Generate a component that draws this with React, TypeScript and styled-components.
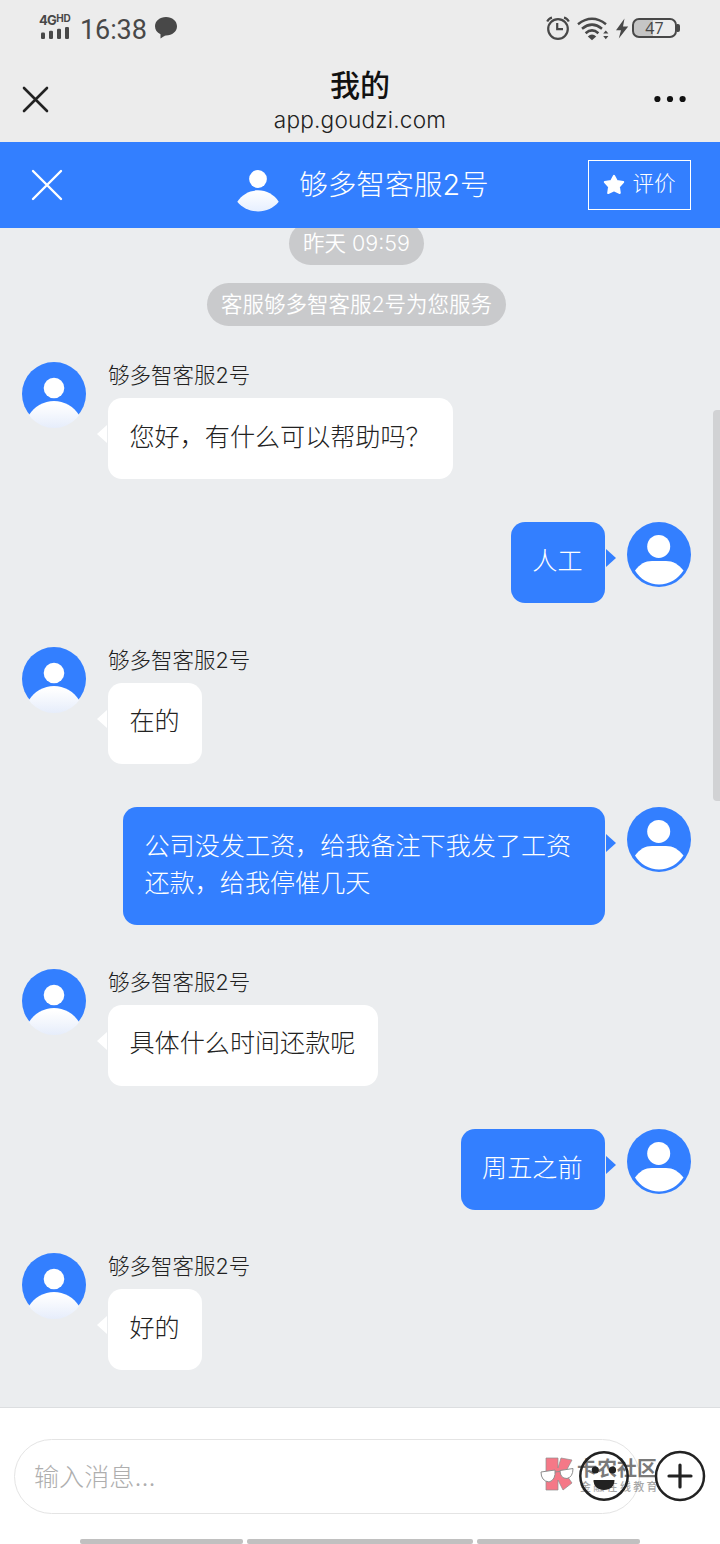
import React from "react";
import styled, { createGlobalStyle } from "styled-components";

const BLUE = "#337fff";

const GlobalStyle = createGlobalStyle`
  * { box-sizing: border-box; }
  body {
    margin: 0;
    background: #ebedf0;
    font-family: "Inter", "Noto Sans CJK SC", "Noto Sans", sans-serif;
    font-weight: 300;
  }
  svg { display: block; flex: none; }
`;

const Screen = styled.div`
  position: relative;
  width: 720px;
  height: 1544px;
  display: flex;
  flex-direction: column;
  overflow: hidden;
  background: #ebedef;
`;

const StatusBar = styled.div`
  height: 56px;
  flex: none;
  display: flex;
  align-items: center;
  padding: 0 39px 0 39px;
  background: #ececec;
  color: #484848;
`;

const Signal = styled.div`
  width: 33px;
  height: 25px;
  display: flex;
  flex-direction: column;
  justify-content: space-between;
  margin-top: -4px;
`;

const Network = styled.div`
  display: flex;
  align-items: flex-start;
  font: 700 13px/13px "Inter", sans-serif;
  letter-spacing: -0.7px;
  sup {
    font-size: 10px;
    line-height: 8px;
    letter-spacing: -0.2px;
  }
`;

const Clock = styled.div`
  width: 67px;
  margin: 4px 7px 0 8px;
  font: 400 27px/30px "Roboto", sans-serif;
  letter-spacing: -0.1px;
  white-space: nowrap;
`;

const StatusIcons = styled.div`
  margin-left: auto;
  display: flex;
  align-items: center;
`;

const Battery = styled.div`
  position: relative;
  width: 45px;
  height: 20px;
  margin: 0 4px 0 3px;
  border: 2px solid #484848;
  border-radius: 7px;
  background: linear-gradient(90deg, #c5c5c5 0 47%, transparent 47%);
  font: 400 16px/16px "Open Sans", sans-serif;
  text-align: center;
  &::after {
    content: "";
    position: absolute;
    right: -5px;
    top: 4px;
    width: 3px;
    height: 8px;
    border-radius: 0 2px 2px 0;
    background: #484848;
  }
`;

const BrowserBar = styled.header`
  height: 86px;
  flex: none;
  display: flex;
  align-items: center;
  justify-content: space-between;
  padding: 0 34px 0 22px;
  background: #ececec;
`;

const PageInfo = styled.div`
  display: flex;
  flex-direction: column;
  align-items: center;
  margin-left: 17px;
  color: #111;
`;

const PageTitle = styled.h1`
  margin: 0;
  font-size: 30px;
  line-height: 38px;
  font-weight: 500;
  padding-top: 2px;
`;

const PageHost = styled.div`
  margin-top: 1px;
  font-size: 22.6px;
  line-height: 30px;
  letter-spacing: 0.2px;
  color: #222;
`;

const ChatHeader = styled.header`
  height: 86px;
  flex: none;
  display: flex;
  align-items: center;
  padding: 0 29px 0 31px;
  background: ${BLUE};
  color: #fff;
`;

const AgentTitle = styled.div`
  flex: 1;
  display: flex;
  align-items: center;
  padding-left: 174px;
  gap: 20px;
  font-size: 28.7px;
  line-height: 40px;
`;

const RateButton = styled.button`
  width: 103px;
  height: 50px;
  display: flex;
  align-items: center;
  justify-content: center;
  gap: 7px;
  padding: 0 0 2px 0;
  border: 1px solid #fff;
  background: transparent;
  color: #fff;
  font: inherit;
  font-size: 21.5px;
  line-height: 26px;
`;

const RateLabel = styled.span`
  padding-bottom: 3px;
`;

const Conversation = styled.main`
  flex: 1;
  min-height: 0;
  display: flex;
  flex-direction: column;
  overflow: hidden;
  background: #ebedef;
`;

const Notices = styled.div`
  width: 713px;
  flex: none;
  height: 134px;
  display: flex;
  flex-direction: column;
  align-items: center;
  gap: 18px;
  margin-top: -6px;
`;

const Notice = styled.div`
  height: 43px;
  padding: 0 14.2px;
  border-radius: 22px;
  background: #c9cacc;
  color: #fff;
  font-size: 21.5px;
  line-height: 42px;
  font-weight: 350;
  white-space: nowrap;
`;

const Messages = styled.div`
  display: flex;
  flex-direction: column;
  gap: 43.3px;
  padding: 6px 29px 0 22px;
`;

const Row = styled.div<{ $mine?: boolean }>`
  display: flex;
  flex-direction: ${(p) => (p.$mine ? "row-reverse" : "row")};
  align-items: flex-start;
  gap: 22px;
`;

const Body = styled.div`
  display: flex;
  flex-direction: column;
  align-items: flex-start;
`;

const Sender = styled.div`
  height: 36px;
  font-size: 21.5px;
  line-height: 26px;
  color: #222;
`;

const Bubble = styled.div<{ $mine?: boolean }>`
  position: relative;
  max-width: 482px;
  padding: 20.8px 22.5px 22.7px 21.5px;
  border-radius: 14px;
  background: ${(p) => (p.$mine ? BLUE : "#fff")};
  color: ${(p) => (p.$mine ? "#fff" : "#222")};
  font-size: 25.1px;
  line-height: 37.5px;
  &::after {
    content: "";
    position: absolute;
    top: 27px;
    ${(p) => (p.$mine ? "right: -11px" : "left: -11px")};
    border: 9px solid transparent;
    border-${(p) => (p.$mine ? "left" : "right")}: 10px solid ${(p) => (p.$mine ? BLUE : "#fff")};
    border-${(p) => (p.$mine ? "right" : "left")}-width: 0;
  }
`;

const Scrollbar = styled.div`
  position: absolute;
  right: 0;
  top: 410px;
  width: 7px;
  height: 391px;
  border-radius: 4px 0 0 4px;
  background: #d1d2d4;
`;

const Composer = styled.footer`
  position: relative;
  height: 137px;
  flex: none;
  display: flex;
  flex-direction: column;
  justify-content: space-between;
  padding: 31px 14px 0;
  border-top: 1px solid #dcdee0;
  background: #fff;
`;

const InputRow = styled.div`
  display: flex;
  align-items: center;
`;

const Field = styled.div`
  width: 626px;
  height: 75px;
  display: flex;
  align-items: center;
  justify-content: space-between;
  padding: 0 10px 3px 19px;
  border: 1px solid #e4e4e4;
  border-radius: 38px;
  color: #aeaeae;
  font-size: 25.1px;
`;

const EmojiSlot = styled.div`
  margin-top: 2px;
`;

const PlusSlot = styled.div`
  margin: 0 0 2px 14px;
`;

const NavBars = styled.div`
  display: flex;
  gap: 4px;
  padding: 0 66px;
`;

const NavBar = styled.i<{ $w: number }>`
  width: ${(p) => p.$w}px;
  height: 5px;
  border-radius: 2px;
  background: #c0c0c0;
`;

const Watermark = styled.div`
  position: absolute;
  left: 540px;
  top: 48px;
  display: flex;
  gap: 3px;
  color: #222;
  opacity: 0.6;
`;

const WatermarkText = styled.div`
  strong {
    display: block;
    padding-top: 1px;
    font-size: 20px;
    line-height: 24px;
    font-weight: 700;
  }
  small {
    display: block;
    padding-left: 3px;
    font-size: 11px;
    line-height: 12px;
    font-weight: 500;
    letter-spacing: 2.3px;
    opacity: 0.65;
  }
`;

const AgentAvatar = ({ id }: { id: string }) => (
  <svg width="64" height="66" viewBox="0 0 64 66">
    <defs>
      <linearGradient id={id} x1="0" y1="0" x2="0" y2="1">
        <stop offset="0.1" stopColor="#fff" />
        <stop offset="1" stopColor="#e6edfb" />
      </linearGradient>
      <clipPath id={`${id}c`}>
        <ellipse cx="32" cy="33" rx="32" ry="33" />
      </clipPath>
    </defs>
    <circle cx="32" cy="32" r="32" fill={BLUE} />
    <circle cx="32" cy="26" r="10.3" fill="#fff" />
    <path d="M7 53A29.3 29.3 0 0 1 57 53L64 66H0Z" fill={`url(#${id})`} clipPath={`url(#${id}c)`} />
  </svg>
);

const UserAvatar = () => (
  <svg width="64" height="65" viewBox="0 0 64 65">
    <ellipse cx="32" cy="32.5" rx="32" ry="32.5" fill={BLUE} />
    <circle cx="31.7" cy="24.4" r="11.5" fill="#fff" />
    <path d="M8 48.5C13 42 18 39 25 39H39C46 39 51 42 56.5 48.5C51 57 42 62.5 32 62.5S13 57 8 48.5Z" fill="#fff" />
  </svg>
);

const PersonSlot = styled.div`
  padding-top: 10px;
`;

const HeaderPerson = () => (
  <svg width="42" height="43" viewBox="0 0 42 43">
    <defs>
      <linearGradient id="hp" x1="0" y1="0" x2="0" y2="1">
        <stop stopColor="#fff" />
        <stop offset="1" stopColor="#e6efff" />
      </linearGradient>
    </defs>
    <circle cx="21" cy="10" r="8.9" fill="#fff" />
    <path d="M0.3 32.7C5 25.5 12.5 21.3 21 21.3S37 25.5 41.7 32.7C37 38.8 29 42.4 21 42.4S5 38.8 0.3 32.7Z" fill="url(#hp)" />
  </svg>
);

const Cross = ({ size, width, color }: { size: number; width: number; color: string }) => (
  <svg width={size} height={size} viewBox={`0 0 ${size} ${size}`} stroke={color} strokeWidth={width} strokeLinecap="round">
    <path d={`M2 2L${size - 2} ${size - 2}M${size - 2} 2L2 ${size - 2}`} />
  </svg>
);

const AGENT = "够多智客服2号";

const messages: { mine?: boolean; text: string }[] = [
  { text: "您好，有什么可以帮助吗？" },
  { mine: true, text: "人工" },
  { text: "在的" },
  { mine: true, text: "公司没发工资，给我备注下我发了工资还款，给我停催几天" },
  { text: "具体什么时间还款呢" },
  { mine: true, text: "周五之前" },
  { text: "好的" },
];

export default function App() {
  return (
    <Screen>
      <GlobalStyle />
      <StatusBar>
        <Signal>
          <Network>
            4G<sup>HD</sup>
          </Network>
          <svg width="30" height="12" viewBox="0 0 30 13" preserveAspectRatio="none" fill="#484848">
            <rect x="2" y="6" width="4" height="7" rx="1.2" />
            <rect x="10" y="4" width="4" height="9" rx="1.2" />
            <rect x="18" y="2" width="4" height="11" rx="1.2" />
            <rect x="26" y="0" width="4" height="13" rx="1.2" />
          </svg>
        </Signal>
        <Clock>16:38</Clock>
        <svg width="24" height="24" viewBox="0 0 24 24" fill="#484848">
          <path d="M12 1C18.2 1 23 5 23 10.3S18.2 19.5 12 19.5C10.8 19.5 10.2 20.2 6.5 22.5V18.2C3 16.6 1 13.7 1 10.3C1 5 5.8 1 12 1Z" />
        </svg>
        <StatusIcons>
          <svg width="84" height="26" viewBox="0 0 84 26" fill="none" stroke="#484848" strokeWidth="2.2">
            <circle cx="13" cy="14" r="9.8" />
            <path d="M12.2 8V14.2H18M2.2 6.5Q4 3.2 7 2.6M23.8 6.5Q22 3.2 19 2.6" />
            <path d="M33 9.2Q47 -1.6 61 9.2M37 13.7Q47 5.6 57 13.7M40.6 18.2Q47 12.6 53.4 18.2" strokeWidth="2.5" />
            <path d="M42.8 21.6Q47 17.5 51.2 21.6L47 25.2Z" fill="#484848" stroke="none" />
            <path d="M58.2 18.6L60.8 15.6L63.4 18.6ZM58.2 21H63.4L60.8 24.2Z" fill="#484848" stroke="none" />
            <path d="M79.5 3.4L71 15.2H76L73.8 23.6L83.2 11.6H78Z" fill="#484848" stroke="none" />
          </svg>
          <Battery>47</Battery>
        </StatusIcons>
      </StatusBar>
      <BrowserBar>
        <Cross size={27} width={2.6} color="#222" />
        <PageInfo>
          <PageTitle>我的</PageTitle>
          <PageHost>app.goudzi.com</PageHost>
        </PageInfo>
        <svg width="32" height="8" viewBox="0 0 32 8" fill="#111">
          <circle cx="3.4" cy="4" r="3.1" />
          <circle cx="16" cy="4" r="3.1" />
          <circle cx="28.6" cy="4" r="3.1" />
        </svg>
      </BrowserBar>
      <ChatHeader>
        <Cross size={32} width={2.4} color="#fff" />
        <AgentTitle>
          <PersonSlot>
            <HeaderPerson />
          </PersonSlot>
          {AGENT}
        </AgentTitle>
        <RateButton>
          <svg width="22" height="21" viewBox="0 0 22 21" fill="#fff" stroke="#fff" strokeWidth="2" strokeLinejoin="round">
            <path d="M11 1.8L13.8 7L20.2 8.1L15.9 12.7L16.8 19L11 16.4L5.2 19L6.1 12.7L1.8 8.1L8.2 7Z" />
          </svg>
          <RateLabel>评价</RateLabel>
        </RateButton>
      </ChatHeader>
      <Conversation>
        <Notices>
          <Notice>昨天 09:59</Notice>
          <Notice>客服{AGENT}为您服务</Notice>
        </Notices>
        <Messages>
          {messages.map((m, i) => (
            <Row key={i} $mine={m.mine}>
              {m.mine ? <UserAvatar /> : <AgentAvatar id={`agent${i}`} />}
              <Body>
                {!m.mine && <Sender>{AGENT}</Sender>}
                <Bubble $mine={m.mine}>{m.text}</Bubble>
              </Body>
            </Row>
          ))}
        </Messages>
      </Conversation>
      <Scrollbar />
      <Composer>
        <InputRow>
          <Field>
            输入消息...
            <EmojiSlot>
              <svg width="50" height="50" viewBox="0 0 50 50">
                <circle cx="25" cy="25" r="23.7" fill="none" stroke="#222" strokeWidth="2.5" />
                <circle cx="16.3" cy="19" r="3.6" fill="#222" />
                <circle cx="33.5" cy="19" r="3.6" fill="#222" />
                <path d="M14.5 29H35.5C35.5 35.5 31 39 25 39S14.5 35.5 14.5 29Z" fill="#222" />
              </svg>
            </EmojiSlot>
          </Field>
          <PlusSlot>
            <svg width="52" height="52" viewBox="0 0 52 52" fill="none" stroke="#222" strokeWidth="2.5" strokeLinecap="round">
              <circle cx="26" cy="26" r="24" />
              <path d="M26 15V37M15 26H37" strokeWidth="3.2" />
            </svg>
          </PlusSlot>
        </InputRow>
        <NavBars>
          <NavBar $w={163} />
          <NavBar $w={226} />
          <NavBar $w={163} />
        </NavBars>
        <Watermark>
          <svg width="34" height="36" viewBox="0 0 34 36">
            <g fill="#f02038" stroke="#444" strokeWidth="0.7">
              <path d="M6 2H18V12L21 2L32 4L25 17L32 27L23 34L18 24V34H6Z" />
            </g>
            <path d="M1 16L15 14Q16 24 9 26Q1 25 1 16ZM20 14.5L33 12.5Q33 21 27 22.5Q20 22.5 20 14.5ZM15 16L20 15.5" fill="#fff" stroke="#444" />
          </svg>
          <WatermarkText>
            <strong>卡农社区</strong>
            <small>金融在线教育</small>
          </WatermarkText>
        </Watermark>
      </Composer>
    </Screen>
  );
}
